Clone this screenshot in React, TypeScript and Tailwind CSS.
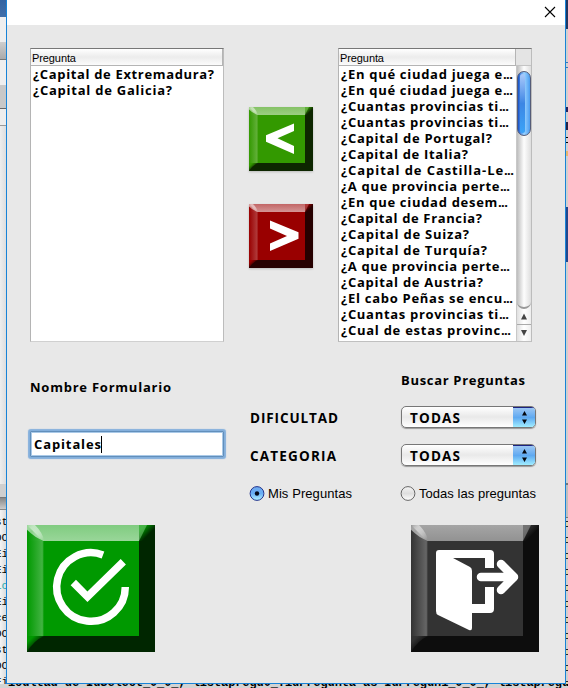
import React, { useLayoutEffect, useRef, useState } from "react";

type Line = { text: string; w: number };

const selected: Line[] = [
  { text: "¿Capital de Extremadura?", w: 181 },
  { text: "¿Capital de Galicia?", w: 139 },
];

const available: Line[] = [
  { text: "¿En qué ciudad juega e...", w: 172 },
  { text: "¿En qué ciudad juega e...", w: 172 },
  { text: "¿Cuantas provincias ti...", w: 168 },
  { text: "¿Cuantas provincias ti...", w: 168 },
  { text: "¿Capital de Portugal?", w: 151 },
  { text: "¿Capital de Italia?", w: 127 },
  { text: "¿Capital de Castilla-Le...", w: 173 },
  { text: "¿A que provincia perte...", w: 169 },
  { text: "¿En que ciudad desem...", w: 167 },
  { text: "¿Capital de Francia?", w: 141 },
  { text: "¿Capital de Suiza?", w: 128 },
  { text: "¿Capital de Turquía?", w: 146 },
  { text: "¿A que provincia perte...", w: 169 },
  { text: "¿Capital de Austria?", w: 142 },
  { text: "¿El cabo Peñas se encu...", w: 172 },
  { text: "¿Cuantas provincias ti...", w: 168 },
  { text: "¿Cual de estas provinc...", w: 170 },
];

/* Tracks a text out so that it fills the given width; a trailing ellipsis stays tight. */
function Fit({ text, w }: Line) {
  const ref = useRef<HTMLSpanElement>(null);
  const [gap, setGap] = useState(0);
  const cut = text.endsWith("...");
  const body = cut ? text.slice(0, -3) : text;
  useLayoutEffect(() => {
    if (!ref.current) return;
    const natural = ref.current.getBoundingClientRect().width - gap * body.length;
    setGap((w - (cut ? 10 : 0) - natural) / (body.length - (cut ? 0 : 1)));
  }, [body, w]);
  return (
    <span className="whitespace-nowrap">
      <span ref={ref} style={{ letterSpacing: gap }}>{body}</span>
      {cut && <span className="tracking-[-0.6px]">...</span>}
    </span>
  );
}

function Header() {
  return (
    <div className="h-[17px] flex-1 border-r border-b border-[#b4b4b4] bg-linear-to-b from-white via-[#ececec] to-[#fbfbfb] pl-[1px] font-['Liberation_Sans'] text-[11px] leading-[18px]">
      <Fit text="Pregunta" w={44} />
    </div>
  );
}

function Rows({ lines }: { lines: Line[] }) {
  return (
    <ul className="min-w-0 flex-1 overflow-hidden bg-white pl-[2px]">
      {lines.map((l, i) => (
        <li key={i} className="h-4 text-[13px] leading-4 font-bold">
          <Fit text={l.text} w={l.w} />
        </li>
      ))}
    </ul>
  );
}

function ScrollBar() {
  return (
    <div className="flex w-[15px] flex-col border-l border-[#c8c8c8] bg-linear-to-r from-[#e0e0e0] via-white to-[#eeeeee]">
      <div className="flex h-[243px] flex-col rounded-b-[7px] border-b-2 border-[#999] bg-linear-to-r from-[#bdbdbd] via-[#fdfdfd] to-[#dedede] pt-[5px]">
        <div className="h-[65px] w-[14px] rounded-[7px] border border-[#555c78] bg-linear-to-r from-[#1550c8] via-[#9bd3ff] to-[#4a9cf0] p-[2px]">
          <div className="h-full w-[5px] rounded-full bg-linear-to-b from-[#a9c9fa] via-[#3c86e4] to-[#3ba3f7]" />
        </div>
      </div>
      <div className="flex h-[16px] items-center justify-center border-b border-[#aaa]">
        <svg width="7" height="7" viewBox="0 0 7 7"><path d="M3 0.5L6 6.5H0z" fill="#444" /></svg>
      </div>
      <div className="flex flex-1 items-center justify-center">
        <svg width="7" height="7" viewBox="0 0 7 7"><path d="M3 6L0 0h6z" fill="#444" /></svg>
      </div>
    </div>
  );
}

type Tone = { id: string; base: string; dark: string; top: string; left: string; inner: string };

function Bevel({ size, h, edge, tone, children }: { size: number; h: number; edge: number; tone: Tone; children: React.ReactNode }) {
  const e = edge;
  return (
    <svg width={size} height={h} viewBox={`0 0 ${size} ${h}`} className="block">
      <defs>
        <linearGradient id={tone.id + "t"} x1="0" y1="0" x2="0" y2="1">
          <stop offset="0" stopColor={tone.top} />
          <stop offset="1" stopColor={tone.inner} />
        </linearGradient>
        <linearGradient id={tone.id + "l"} x1="0" y1="0" x2="1" y2="0">
          <stop offset="0" stopColor={tone.base} />
          <stop offset="0.9" stopColor={tone.left} />
          <stop offset="1" stopColor={tone.base} />
        </linearGradient>
        <linearGradient id={tone.id + "c"} x1="0" y1="0" x2="1" y2="1">
          <stop offset="0.2" stopColor={tone.base} />
          <stop offset="0.6" stopColor={tone.dark} />
        </linearGradient>
        <linearGradient id={tone.id + "w"} x1="0" y1="0" x2="1" y2="0.9">
          <stop offset="0" stopColor={tone.inner} />
          <stop offset="0.35" stopColor="#fff" stopOpacity="0.5" />
          <stop offset="1" stopColor={tone.inner} />
        </linearGradient>
      </defs>
      <rect width={size} height={h} fill={tone.dark} />
      <rect x={e} y={e} width={size - 2 * e} height={h - 2 * e} fill={tone.base} />
      <rect width={e + 1} height={h - e} fill={`url(#${tone.id}l)`} />
      <rect width={size - e} height={e} fill={`url(#${tone.id}t)`} />
      <path d={`M0 0L${e} ${e}H0z`} fill={`url(#${tone.id}l)`} />
      <path d={`M0 0H${e * 0.5}Q${e} ${e * 0.5} ${e + 1} ${e}Q${e * 0.5} ${e * 0.8} 0 ${e * 0.3}z`} fill={`url(#${tone.id}w)`} />
      <rect x={size - e} width={e} height={e} fill={`url(#${tone.id}c)`} />
      <path d={`M${size - e} 0H${size - e * 0.5}L${size - e} ${e}z`} fill={tone.top} opacity="0.55" />
      <path d={`M0 ${h - e}H${e + 1}Q${e * 0.4} ${h - e * 0.7} 0 ${h}z`} fill={`url(#${tone.id}c)`} />
      {children}
    </svg>
  );
}

const green: Tone = { id: "g", base: "#339900", dark: "#0d2600", top: "#85c266", left: "#62b039", inner: "#9dce84" };
const red: Tone = { id: "r", base: "#990000", dark: "#260000", top: "#c26666", left: "#b03b3b", inner: "#d49595" };
const ok: Tone = { id: "k", base: "#009900", dark: "#002600", top: "#80cc80", left: "#42b342", inner: "#99d699" };
const exit: Tone = { id: "x", base: "#333333", dark: "#0d0d0d", top: "#a5a5a5", left: "#666666", inner: "#929292" };

function Combo() {
  return (
    <div className="flex h-[22px] w-[135px] overflow-hidden rounded-[5px] border border-[#777] bg-linear-to-b from-white via-[#e9e9e9] to-white shadow-[0_1px_1px_#999]">
      <span className="flex-1 pl-[8px] text-[13.5px] leading-[22px] font-bold"><Fit text="TODAS" w={50} /></span>
      <span className="flex w-[22px] items-center justify-center border-t border-[#1c2381] bg-linear-to-b from-[#9bc6f3] via-[#5fa9f1] to-[#a0edff]">
        <svg width="5" height="13" viewBox="0 0 5 13"><path d="M2.5 0L5 4.5H0zM2.5 13L0 8.5h5z" fill="#05080f" /></svg>
      </span>
    </div>
  );
}

function Radio({ on, label, w }: { on?: boolean; label: string; w: number }) {
  return (
    <label className="-ml-px flex items-center gap-[3px] font-['Liberation_Sans'] text-[13px] leading-[17px] whitespace-nowrap">
      <svg width="16" height="16" viewBox="0 0 16 16" className="shrink-0">
        <defs>
          <linearGradient id={on ? "ron" : "roff"} x1="0" y1="0" x2="0" y2="1">
            <stop offset="0" stopColor={on ? "#6fa9ee" : "#f5f5f5"} />
            <stop offset="0.5" stopColor={on ? "#68aef5" : "#dedede"} />
            <stop offset="1" stopColor={on ? "#b5f5ff" : "#ffffff"} />
          </linearGradient>
        </defs>
        <circle cx="8" cy="7.5" r="6.9" fill={on ? "url(#ron)" : "url(#roff)"} stroke={on ? "#26358d" : "#666"} />
        {on && <circle cx="8" cy="7.5" r="2.2" fill="#050a18" />}
      </svg>
      <Fit text={label} w={w} />
    </label>
  );
}

const leftSnips = ["st", "OC", "Ei", "Ei", "ic", "Ei", "ce", "OC", "st", "OC", "Ei"];

export default function App() {
  return (
    <div className="flex h-[688px] w-[568px] flex-col overflow-hidden bg-[#d8d8d8] font-['Open_Sans','Noto_Sans',sans-serif] text-black">
      <div className="flex h-[684px]">
        <div className="w-[6px] shrink-0 overflow-hidden bg-[#e9e9e9]">
          <div className="h-[17px] bg-linear-to-b from-[#3464a2] to-[#426fa9]" />
          <div className="h-[25px] bg-[#efefef]" />
          <div className="h-[18px] border-b border-[#777] bg-linear-to-b from-[#cecece] to-[#aaa]" />
          <div className="h-[25px] bg-[#efefef]" />
          <div className="h-[24px] border-b border-[#666] bg-[#c8c8c8]" />
          <div className="h-[17px] border-b border-[#999] bg-[#eee]" />
          <div className="h-[358px] bg-linear-to-r from-[#eeeeee] to-[#dedede]" />
          <div className="h-[14px] border-b border-[#777] bg-[#cfcfcf]" />
          <div className="h-[12px] border-b border-[#888] bg-linear-to-b from-[#888] to-[#ccc]" />
          <div className="h-[174px] bg-linear-to-r from-[#f4f4f4] to-[#dcdcdc] pt-[4px] font-['Liberation_Mono'] text-[11px] leading-4">
            {leftSnips.map((s, i) => (
              <div key={i} className={i === 4 ? "-ml-[5px] h-4 text-[#1caab0]" : "-ml-[5px] h-4"}>{s}</div>
            ))}
          </div>
        </div>

        <main className="flex w-[560px] shrink-0 flex-col border-x border-b border-[#1883d7] bg-[#e8e8e8]">
          <div className="flex h-[25px] shrink-0 justify-end bg-white pt-[6px] pr-[9px]">
            <svg width="12" height="12" viewBox="0 0 12 12"><path d="M1 1L11 11M11 1L1 11" stroke="#000" strokeWidth="1.1" /></svg>
          </div>

          <div className="flex h-[317px] shrink-0 pt-[23px] pl-[23px]">
            <section className="flex h-[294px] w-[194px] flex-col border border-t-[#777] border-r-[#bcbcbc] border-b-[#d0d0d0] border-l-[#b4b4b4] bg-white">
              <div className="flex"><Header /></div>
              <Rows lines={selected} />
            </section>

            <div className="flex w-[114px] flex-col items-center gap-[33px] pt-[59px]">
              <div className="h-[64px] shadow-[0_1px_2px_#bbb]">
                <Bevel size={64} h={64} edge={8} tone={green}>
                  <path d="M45 16.5V24L28.5 31.2L45 39V47L17 34.8V28.2z" fill="#fff" />
                </Bevel>
              </div>
              <div className="h-[64px] shadow-[0_1px_2px_#bbb]">
                <Bevel size={64} h={64} edge={8} tone={red}>
                  <path d="M21 16.5V24.5L38 32L21 39.5V47L49.5 34.8V28.2z" fill="#fff" />
                </Bevel>
              </div>
            </div>

            <section className="flex h-[294px] w-[194px] flex-col border border-t-[#777] border-r-[#bcbcbc] border-b-[#c0c0c0] border-l-[#b4b4b4] bg-white">
              <div className="flex">
                <Header />
                <div className="w-[15px] border-b border-[#c4c4c4] bg-[#e4e4e4]" />
              </div>
              <div className="flex h-[275px]">
                <Rows lines={available} />
                <ScrollBar />
              </div>
            </section>
          </div>

          <div className="flex h-[183px] shrink-0">
            <div className="flex w-[243px] flex-col pl-[21px]">
              <h2 className="mt-[36px] ml-[2px] text-[13px] leading-[18px] font-bold"><Fit text="Nombre Formulario" w={141} /></h2>
              <div className="mt-[35px] ml-[2px] flex h-[26px] w-[194px] items-center rounded-[1px] border border-[#628fbb] bg-white pl-[3px] shadow-[0_0_1px_2px_#83afdc,inset_0_0_0_1px_#a9c9e8]">
                <span className="text-[13px] leading-[18px] font-bold"><Fit text="Capitales" w={67} /></span>
                <span className="-ml-px h-[17px] w-px bg-black" />
              </div>
            </div>
            <div className="grid grid-cols-[151px_150px] grid-rows-[26px_38px_37px_38px] content-start pt-[25px]">
              <span />
              <h2 className="text-[13px] leading-[26px] font-bold"><Fit text="Buscar Preguntas" w={124} /></h2>
              <span className="pt-[15px] text-[13.5px] leading-[20px] font-bold"><Fit text="DIFICULTAD" w={88} /></span>
              <div className="pt-[13px]"><Combo /></div>
              <span className="pt-[15px] text-[13.5px] leading-[20px] font-bold"><Fit text="CATEGORIA" w={86} /></span>
              <div className="pt-[13px]"><Combo /></div>
              <div className="pt-[17px]"><Radio on label="Mis Preguntas" w={84} /></div>
              <div className="pt-[17px]"><Radio label="Todas las preguntas" w={117} /></div>
            </div>
          </div>

          <div className="flex justify-between pr-[26px] pl-[20px]">
            <Bevel size={128} h={127} edge={16} tone={ok}>
              <path d="M76 29.9A34.3 34.3 0 1 0 98.3 62" fill="none" stroke="#fff" strokeWidth="7.5" />
              <path d="M46.3 57.5L60.5 71.8L96.3 36.8" fill="none" stroke="#fff" strokeWidth="7.5" />
            </Bevel>
            <Bevel size={128} h={127} edge={16} tone={exit}>
              <path d="M28 25H79Q83 25 83 29V43H74V33H42L59 42Q61 43 61 46V79H74V62H83V84Q83 88 79 88H61V103Q61 106 58 105L27 90Q25 89 25 86V28Q25 25 28 25z" fill="#fff" />
              <path d="M70 52H100M90 39L103 52L90 65" fill="none" stroke="#fff" strokeWidth="8.5" strokeLinecap="round" strokeLinejoin="round" />
            </Bevel>
          </div>
        </main>

        <div className="w-[2px] shrink-0 bg-[#cfcfcf]">
          <div className="h-[29px] bg-[#223661]" />
          <div className="h-[178px] bg-[#d0d0d0] pt-[33px]">
            <div className="h-[6px] border-y border-[#3874b8]" />
            <div className="mt-[39px] h-[5px] bg-[#24245d]" />
            <div className="mt-[10px] h-[8px] bg-[#272243]" />
            <div className="mt-[7px] h-[6px] border-y border-black" />
            <div className="mt-[8px] h-[5px] bg-[#e5b66d]" />
          </div>
          <div className="h-[55px] bg-[#23468b]" />
          <div className="h-[222px] border-b border-[#777]" />
          <div className="h-[34px] border-y border-[#777] bg-[#bebebe]" />
          {leftSnips.map((_, i) => (
            <div key={i} className="h-4 pt-[3px]"><div className="h-[6px] border-y border-[#29292b] bg-[#dcd3aa]" /></div>
          ))}
        </div>
      </div>
      <div className="h-[4px] overflow-hidden bg-[#d3d3d3] pl-[8px] font-['Liberation_Mono'] text-[12px]">
        <div className="-mt-[7px] leading-[12px] font-bold tracking-[-0.1px] whitespace-pre">icultad de IdSelect_0_0_, listapregu0_.idPregunta as IdPregun1_0_0_, listapregu0_</div>
      </div>
    </div>
  );
}
